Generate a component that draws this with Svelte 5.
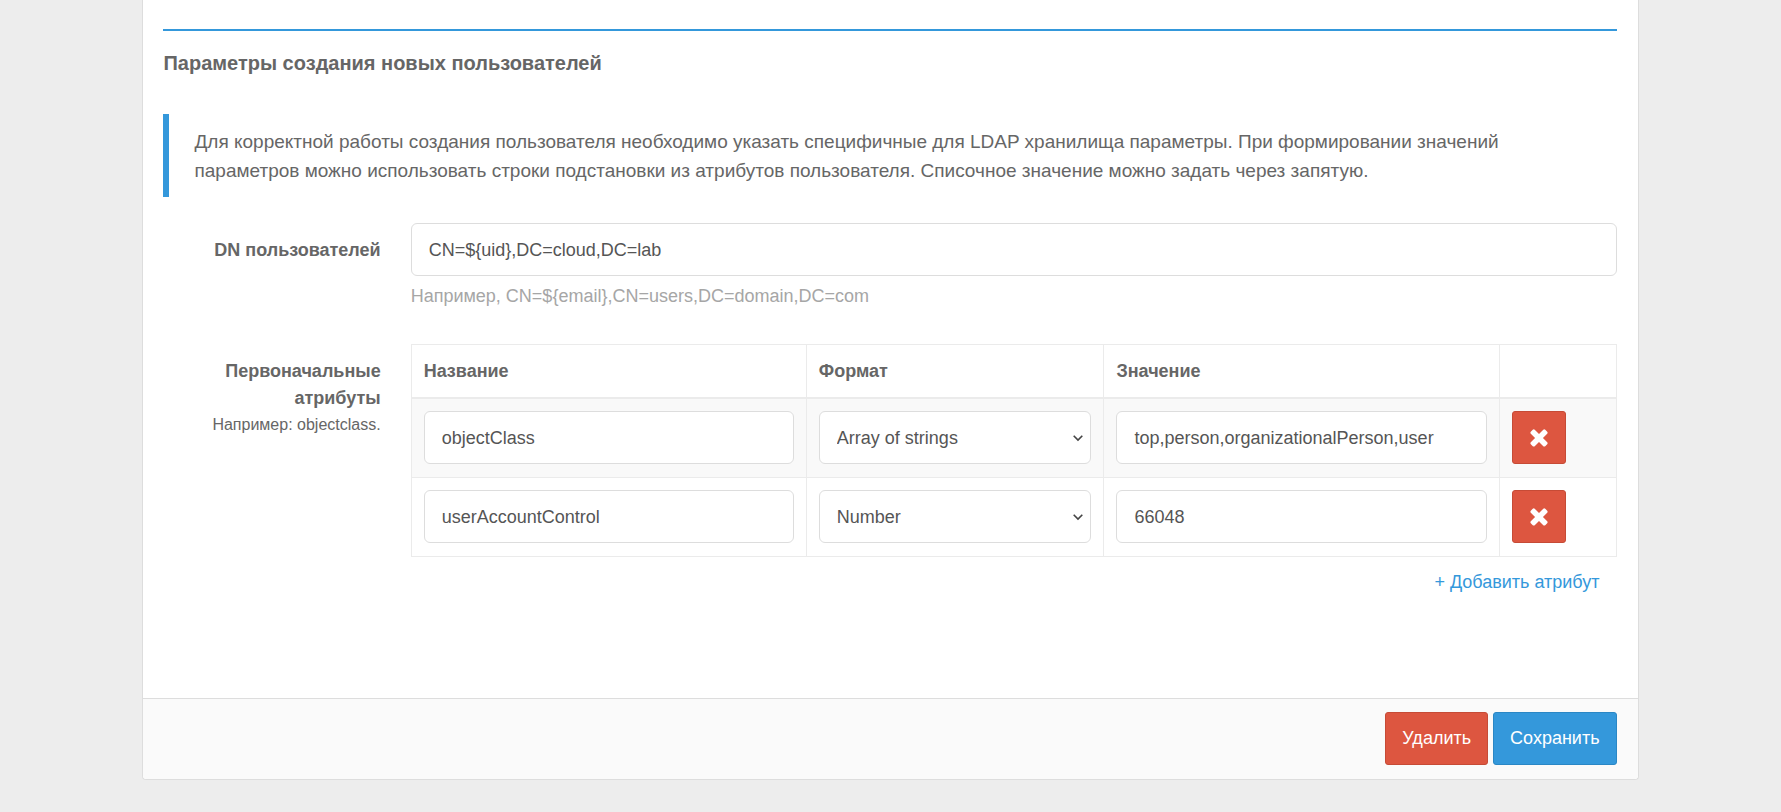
<script lang="ts">
	type Attribute = {
		id: number;
		name: string;
		format: string;
		value: string;
	};

	const formats = ['String', 'Number', 'Boolean', 'Array of strings'];

	let userDn = $state('CN=${uid},DC=cloud,DC=lab');
	let nextId = 3;

	let attributes = $state<Attribute[]>([
		{
			id: 1,
			name: 'objectClass',
			format: 'Array of strings',
			value: 'top,person,organizationalPerson,user'
		},
		{ id: 2, name: 'userAccountControl', format: 'Number', value: '66048' }
	]);

	function addAttribute(event: MouseEvent) {
		event.preventDefault();
		attributes.push({ id: nextId++, name: '', format: 'String', value: '' });
	}

	function removeAttribute(id: number) {
		attributes = attributes.filter((attribute) => attribute.id !== id);
	}
</script>

<form class="panel" onsubmit={(event) => event.preventDefault()}>
	<div class="panel-body">
		<h2>Параметры создания новых пользователей</h2>

		<p class="callout">
			Для корректной работы создания пользователя необходимо указать специфичные для LDAP хранилища
			параметры. При формировании значений параметров можно использовать строки подстановки из
			атрибутов пользователя. Списочное значение можно задать через запятую.
		</p>

		<div class="form-row">
			<label class="row-label" for="user-dn">DN пользователей</label>
			<div>
				<input id="user-dn" class="control" type="text" bind:value={userDn} />
				<p class="hint">Например, CN=${'{'}email{'}'},CN=users,DC=domain,DC=com</p>
			</div>
		</div>

		<div class="form-row">
			<div class="row-label" id="attributes-label">
				Первоначальные атрибуты
				<small>Например: objectclass.</small>
			</div>
			<div>
				<table aria-labelledby="attributes-label">
					<colgroup>
						<col class="col-text" />
						<col class="col-format" />
						<col class="col-text" />
						<col />
					</colgroup>
					<thead>
						<tr>
							<th>Название</th>
							<th>Формат</th>
							<th>Значение</th>
							<td></td>
						</tr>
					</thead>
					<tbody>
						{#each attributes as attribute (attribute.id)}
							<tr>
								<td>
									<input
										class="control"
										type="text"
										aria-label="Название"
										bind:value={attribute.name}
									/>
								</td>
								<td>
									<div class="select">
										<select class="control" aria-label="Формат" bind:value={attribute.format}>
											{#each formats as format}
												<option>{format}</option>
											{/each}
										</select>
										<svg class="chevron" viewBox="0 0 10 8" aria-hidden="true">
											<path d="M0.7 1.7L5 6l4.3-4.3" />
										</svg>
									</div>
								</td>
								<td>
									<input
										class="control"
										type="text"
										aria-label="Значение"
										bind:value={attribute.value}
									/>
								</td>
								<td>
									<button
										class="btn danger icon"
										type="button"
										aria-label="Удалить атрибут"
										onclick={() => removeAttribute(attribute.id)}
									>
										<svg viewBox="0 0 1792 1792" aria-hidden="true">
											<path
												d="M1490 1322q0 40-28 68l-136 136q-28 28-68 28t-68-28l-294-294-294 294q-28 28-68 28t-68-28l-136-136q-28-28-28-68t28-68l294-294-294-294q-28-28-28-68t28-68l136-136q28-28 68-28t68 28l294 294 294-294q28-28 68-28t68 28l136 136q28 28 28 68t-28 68l-294 294 294 294q28 28 28 68z"
											/>
										</svg>
									</button>
								</td>
							</tr>
						{/each}
					</tbody>
				</table>
				<div class="add">
					<a href="#add" onclick={addAttribute}>+ Добавить атрибут</a>
				</div>
			</div>
		</div>
	</div>

	<footer>
		<button class="btn danger" type="button">Удалить</button>
		<button class="btn primary" type="submit">Сохранить</button>
	</footer>
</form>

<style>
	:global(body) {
		background: #ededed;
	}

	.panel,
	.panel * {
		box-sizing: border-box;
	}

	.panel {
		margin: 0 8% 32px;
		border: 1px solid #ddd;
		border-top: 0;
		border-radius: 0 0 4px 4px;
		background: #fff;
		color: #666;
		font-family: 'Liberation Sans', Arial, sans-serif;
		font-size: 18px;
		line-height: 27px;
	}

	.panel-body {
		padding: 29px 21px 102px 20px;
	}

	h2 {
		margin: 0 0 36px;
		padding-top: 18px;
		border-top: 2px solid #3498db;
		font-size: 20px;
		line-height: 29px;
	}

	.callout {
		margin: 0 0 26px;
		padding: 13px 100px 12px 25px;
		border-left: 6px solid #3498db;
		font-size: 19px;
		line-height: 29px;
	}

	.form-row {
		display: grid;
		grid-template-columns: calc((100% + 30px) / 6 - 30px) 1fr;
		gap: 30px;
		margin-bottom: 34px;
	}

	.form-row:last-child {
		margin-bottom: 0;
	}

	.row-label {
		padding-top: 14px;
		font-weight: 700;
		text-align: right;
	}

	small {
		display: block;
		font-size: 16px;
		line-height: 25px;
		font-weight: 400;
	}

	.control {
		display: block;
		width: 100%;
		height: 53px;
		margin: 0;
		padding: 2px 17px 0;
		border: 1px solid #ddd;
		border-radius: 6px;
		background: #fff;
		color: #555;
		font: inherit;
	}

	.hint {
		margin: 7px 0 0;
		color: #a6a6a6;
	}

	table {
		width: 100%;
		border-collapse: collapse;
		table-layout: fixed;
	}

	.col-text {
		width: 32.8%;
	}

	.col-format {
		width: 24.7%;
	}

	th,
	td {
		padding: 12px 12px 13px;
		border: 1px solid #ebebeb;
		text-align: left;
	}

	thead th,
	thead td {
		padding: 13px 12px 12px;
		border-bottom-width: 2px;
	}

	tbody tr:nth-child(odd) {
		background: #f9f9f9;
	}

	.select {
		position: relative;
	}

	select.control {
		appearance: none;
		padding-right: 32px;
	}

	.chevron {
		position: absolute;
		top: 23px;
		right: 8px;
		width: 10px;
		height: 8px;
		fill: none;
		stroke: #444;
		stroke-width: 1.6;
		pointer-events: none;
	}

	.btn {
		height: 53px;
		padding: 0 16px;
		border: 1px solid;
		border-radius: 3px;
		color: #fff;
		font: inherit;
		cursor: pointer;
	}

	.danger {
		border-color: #c64b36;
		background: #dd5640;
	}

	.primary {
		border-color: #2a87c5;
		background: #3498db;
	}

	.icon {
		display: flex;
		align-items: center;
		justify-content: center;
		width: 54px;
		padding: 0 0 2px;
	}

	.icon svg {
		width: 26px;
		height: 26px;
		fill: #fff;
	}

	.add {
		padding: 12px 17px 0;
		text-align: right;
	}

	a {
		color: #3498db;
		text-decoration: none;
	}

	footer {
		display: flex;
		justify-content: flex-end;
		gap: 5px;
		padding: 13px 21px 14px;
		border-top: 1px solid #ddd;
		border-radius: 0 0 4px 4px;
		background: #fafafa;
	}
</style>
